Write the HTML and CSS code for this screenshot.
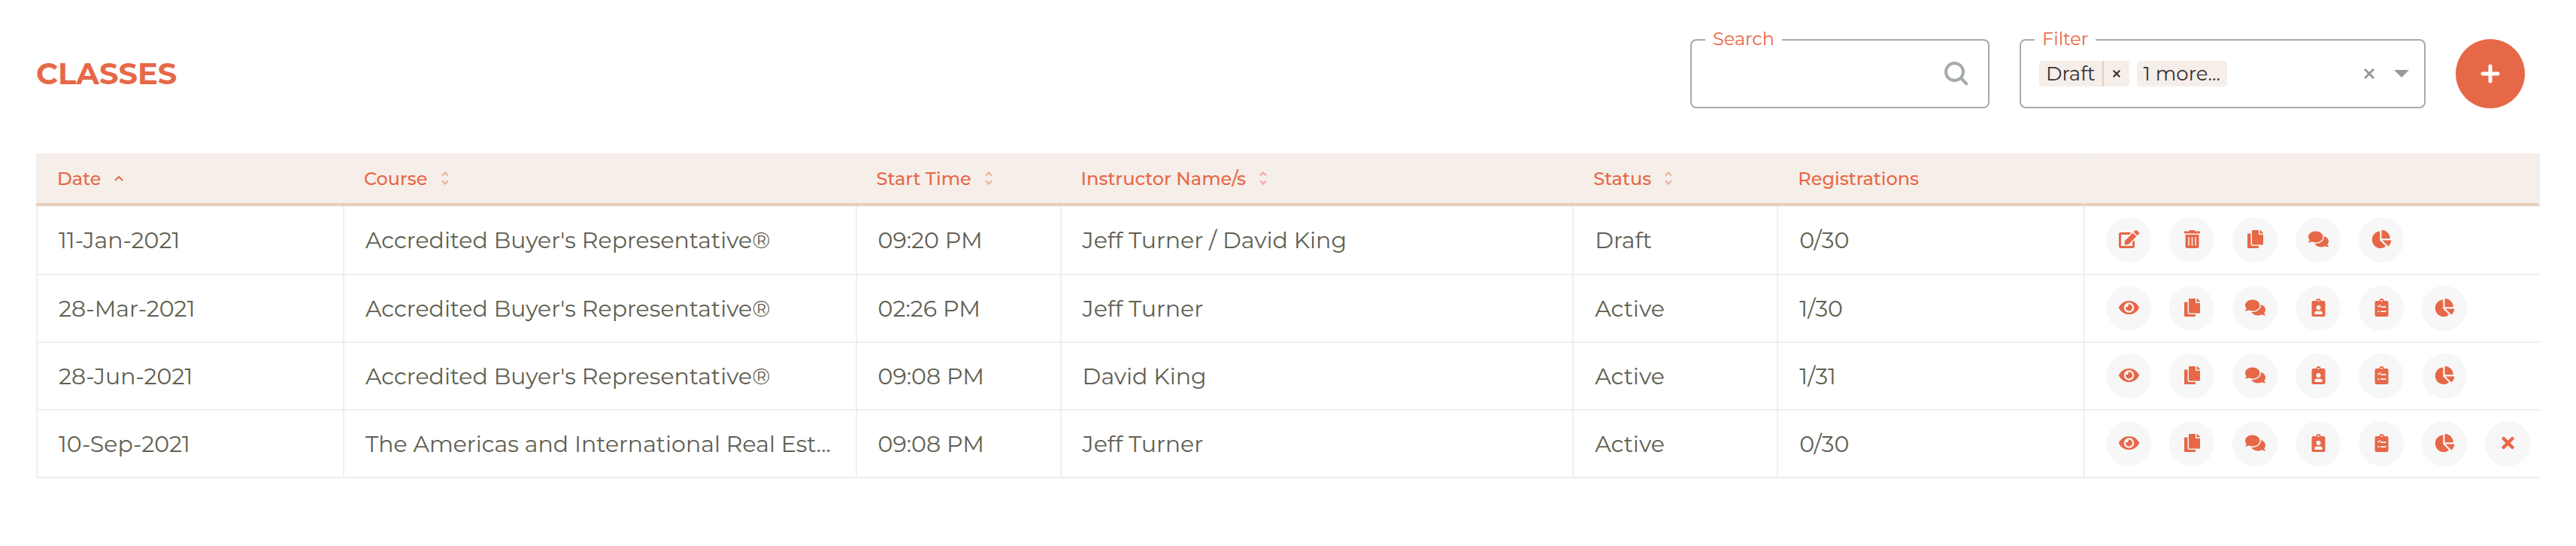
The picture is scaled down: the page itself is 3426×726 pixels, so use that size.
FILE: index.html
```
<!DOCTYPE html>
<html lang="en">

<head>
	<meta charset="UTF-8">
	<meta name="viewport" content="width=device-width, initial-scale=1.0">
	<title>Classes</title>
	<link rel="stylesheet" href="styles.css">
</head>

<body>
	<svg class="sprite" aria-hidden="true">
		<symbol id="edit" viewBox="0 0 576 512">
			<path d="M402.6 83.2l90.2 90.2c3.8 3.8 3.8 10 0 13.8L274.4 405.6l-92.8 10.3c-12.4 1.4-22.9-9.1-21.5-21.5l10.3-92.8L388.8 83.2c3.8-3.8 10-3.8 13.8 0zm162-22.9l-48.8-48.8c-15.2-15.2-39.9-15.2-55.2 0l-35.4 35.4c-3.8 3.8-3.8 10 0 13.8l90.2 90.2c3.8 3.8 10 3.8 13.8 0l35.4-35.4c15.2-15.3 15.2-40 0-55.2zM384 346.2V448H64V128h229.8c3.2 0 6.2-1.3 8.5-3.5l40-40c7.6-7.6 2.2-20.5-8.5-20.5H48C21.5 64 0 85.5 0 112v352c0 26.5 21.5 48 48 48h352c26.5 0 48-21.5 48-48V306.2c0-10.7-12.9-16-20.5-8.5l-40 40c-2.2 2.3-3.5 5.3-3.5 8.5z" />
		</symbol>
		<symbol id="trash" viewBox="0 0 448 512">
			<path d="M32 464a48 48 0 0 0 48 48h288a48 48 0 0 0 48-48V128H32zm272-256a16 16 0 0 1 32 0v224a16 16 0 0 1-32 0zm-96 0a16 16 0 0 1 32 0v224a16 16 0 0 1-32 0zm-96 0a16 16 0 0 1 32 0v224a16 16 0 0 1-32 0zM432 32H312l-9.4-18.7A24 24 0 0 0 281.1 0H166.8a23.72 23.72 0 0 0-21.4 13.3L136 32H16A16 16 0 0 0 0 48v32a16 16 0 0 0 16 16h416a16 16 0 0 0 16-16V48a16 16 0 0 0-16-16z" />
		</symbol>
		<symbol id="copy" viewBox="0 0 448 512">
			<path d="M320 448v40c0 13.255-10.745 24-24 24H24c-13.255 0-24-10.745-24-24V120c0-13.255 10.745-24 24-24h72v296c0 30.879 25.121 56 56 56h168zm0-344V0H152c-13.255 0-24 10.745-24 24v368c0 13.255 10.745 24 24 24h272c13.255 0 24-10.745 24-24V128H344c-13.2 0-24-10.8-24-24zm120.971-31.029L375.029 7.029A24 24 0 0 0 358.059 0H352v96h96v-6.059a24 24 0 0 0-7.029-16.97z" />
		</symbol>
		<symbol id="comments" viewBox="0 0 576 512">
			<path d="M416 192c0-88.4-93.1-160-208-160S0 103.6 0 192c0 34.3 14.1 65.9 38 92-13.4 30.2-35.5 54.2-35.8 54.5-2.2 2.3-2.8 5.7-1.5 8.7S4.8 352 8 352c36.6 0 66.9-12.3 88.7-25 32.2 15.7 70.3 25 111.3 25 114.9 0 208-71.6 208-160zm122 220c23.9-26 38-57.7 38-92 0-66.9-53.5-124.2-129.3-148.1.9 6.6 1.3 13.3 1.3 20.1 0 105.9-107.7 192-240 192-10.8 0-21.3-.8-31.7-1.9C207.8 439.6 281.8 480 368 480c41 0 79.1-9.2 111.3-25 21.8 12.7 52.1 25 88.7 25 3.2 0 6.1-1.9 7.3-4.8 1.3-2.9.7-6.3-1.5-8.7-.3-.3-22.4-24.2-35.8-54.5z" />
		</symbol>
		<symbol id="chart" viewBox="0 0 544 512">
			<path d="M527.79 288H290.5l158.03 158.03c6.04 6.04 15.98 6.53 22.19.68 38.7-36.46 65.32-85.61 73.13-140.86 1.34-9.46-6.51-17.85-16.06-17.85zm-15.83-64.8C503.72 103.74 408.26 8.28 288.8.04 279.68-.59 272 7.1 272 16.24V240h223.77c9.14 0 16.82-7.68 16.19-16.8zM224 288V50.71c0-9.55-8.39-17.4-17.84-16.06C86.99 51.49-4.1 155.6.14 280.37 4.5 408.51 114.83 513.59 243.03 511.98c50.4-.63 96.97-16.87 135.26-44.03 7.9-5.6 8.42-17.23 1.57-24.08L224 288z" />
		</symbol>
		<symbol id="eye" viewBox="0 0 576 512">
			<path d="M572.52 241.4C518.29 135.59 410.93 64 288 64S57.68 135.64 3.48 241.41a32.35 32.35 0 0 0 0 29.19C57.71 376.41 165.07 448 288 448s230.32-71.64 284.52-177.41a32.35 32.35 0 0 0 0-29.19zM288 400a144 144 0 1 1 144-144 143.93 143.93 0 0 1-144 144zm0-240a95.31 95.31 0 0 0-25.31 3.79 47.85 47.85 0 0 1-66.9 66.9A95.78 95.78 0 1 0 288 160z" />
		</symbol>
		<symbol id="attendees" viewBox="0 0 384 512">
			<path fill-rule="evenodd" d="M336 64h-80a64 64 0 0 0-128 0H48a48 48 0 0 0-48 48v352a48 48 0 0 0 48 48h288a48 48 0 0 0 48-48V112a48 48 0 0 0-48-48zM192 40a24 24 0 1 1 0 48 24 24 0 0 1 0-48zm0 152a64 64 0 1 1 0 128 64 64 0 0 1 0-128zm112 236.8c0 10.6-10 19.2-22.4 19.2H102.4C90 448 80 439.4 80 428.8v-19.2c0-31.8 30.1-57.6 67.2-57.6h5c24.6 10 55 10 79.6 0h5c37.1 0 67.2 25.8 67.2 57.6z" />
		</symbol>
		<symbol id="checklist" viewBox="0 0 384 512">
			<path fill-rule="evenodd" d="M336 64h-80a64 64 0 0 0-128 0H48a48 48 0 0 0-48 48v352a48 48 0 0 0 48 48h288a48 48 0 0 0 48-48V112a48 48 0 0 0-48-48zM192 40a24 24 0 1 1 0 48 24 24 0 0 1 0-48zM68 212l20-20 21 21 46-46 20 20-66 66zM176 220h136a8 8 0 0 1 8 8v20a8 8 0 0 1-8 8H152zM104 340a24 24 0 1 1 0 48 24 24 0 0 1 0-48zM168 346h144a8 8 0 0 1 8 8v20a8 8 0 0 1-8 8H168a8 8 0 0 1-8-8v-20a8 8 0 0 1 8-8z" />
		</symbol>
		<symbol id="times" viewBox="0 0 352 512">
			<path d="M242.72 256l100.07-100.07c12.28-12.28 12.28-32.19 0-44.48l-22.24-22.24c-12.28-12.28-32.19-12.28-44.48 0L176 189.28 75.93 89.21c-12.28-12.28-32.19-12.28-44.48 0L9.21 111.45c-12.28 12.28-12.28 32.19 0 44.48L109.28 256 9.21 356.07c-12.28 12.28-12.28 32.19 0 44.48l22.24 22.24c12.28 12.28 32.2 12.28 44.48 0L176 322.72l100.07 100.07c12.28 12.28 32.2 12.28 44.48 0l22.24-22.24c12.28-12.28 12.28-32.19 0-44.48L242.72 256z" />
		</symbol>
		<symbol id="cross" viewBox="0 0 14 14">
			<path d="M1 1l12 12M13 1L1 13" fill="none" stroke="currentColor" stroke-width="3" />
		</symbol>
		<symbol id="sort" viewBox="0 0 10 18">
			<path d="M1 5.5L5 1.5l4 4M1 12.5l4 4 4-4" fill="none" stroke="currentColor" stroke-width="2" />
		</symbol>
		<symbol id="sort-asc" viewBox="0 0 12 8">
			<path d="M1 7l5-5 5 5" fill="none" stroke="currentColor" stroke-width="2" />
		</symbol>
	</svg>

	<header class="toolbar">
		<h1>Classes</h1>
		<div class="field search">
			<label for="search">Search</label>
			<input type="search" id="search">
			<svg class="search-icon" viewBox="0 0 32 32">
				<circle cx="13.5" cy="13.5" r="11.5" />
				<path d="M21.5 21.5l9 9" />
			</svg>
		</div>
		<div class="field filter">
			<label for="filter">Filter</label>
			<select id="filter">
				<option>Draft</option>
				<option>Active</option>
			</select>
			<div class="chips">
				<span class="chip">
					<span class="chip-label">Draft</span>
					<button class="chip-remove" aria-label="Remove"><svg><use href="#cross" /></svg></button>
				</span>
				<span class="chip"><span class="chip-label">1 more...</span></span>
				<button class="clear" aria-label="Clear"><svg><use href="#cross" /></svg></button>
				<span class="caret"></span>
			</div>
		</div>
		<button class="add" aria-label="Add class">
			<svg viewBox="0 0 26 26"><path d="M13 3v20M3 13h20" /></svg>
		</button>
	</header>

	<table class="classes">
		<colgroup>
			<col class="col-medium">
			<col class="col-wide">
			<col class="col-narrow">
			<col class="col-wide">
			<col class="col-narrow">
			<col class="col-medium">
			<col>
		</colgroup>
		<thead>
			<tr>
				<th><button class="sort active">Date <svg><use href="#sort-asc" /></svg></button></th>
				<th><button class="sort">Course <svg><use href="#sort" /></svg></button></th>
				<th><button class="sort">Start Time <svg><use href="#sort" /></svg></button></th>
				<th><button class="sort">Instructor Name/s <svg><use href="#sort" /></svg></button></th>
				<th><button class="sort">Status <svg><use href="#sort" /></svg></button></th>
				<th>Registrations</th>
				<th class="actions-head"></th>
			</tr>
		</thead>
		<tbody>
			<tr>
				<td>11-Jan-2021</td>
				<td>Accredited Buyer's Representative®</td>
				<td>09:20 PM</td>
				<td>Jeff Turner / David King</td>
				<td>Draft</td>
				<td>0/30</td>
				<td>
					<div class="actions">
						<button aria-label="Edit"><svg><use href="#edit" /></svg></button>
						<button aria-label="Delete"><svg><use href="#trash" /></svg></button>
						<button aria-label="Copy"><svg><use href="#copy" /></svg></button>
						<button aria-label="Messages"><svg><use href="#comments" /></svg></button>
						<button aria-label="Report"><svg><use href="#chart" /></svg></button>
					</div>
				</td>
			</tr>
			<tr>
				<td>28-Mar-2021</td>
				<td>Accredited Buyer's Representative®</td>
				<td>02:26 PM</td>
				<td>Jeff Turner</td>
				<td>Active</td>
				<td>1/30</td>
				<td>
					<div class="actions">
						<button aria-label="View"><svg><use href="#eye" /></svg></button>
						<button aria-label="Copy"><svg><use href="#copy" /></svg></button>
						<button aria-label="Messages"><svg><use href="#comments" /></svg></button>
						<button aria-label="Attendees"><svg><use href="#attendees" /></svg></button>
						<button aria-label="Checklist"><svg><use href="#checklist" /></svg></button>
						<button aria-label="Report"><svg><use href="#chart" /></svg></button>
					</div>
				</td>
			</tr>
			<tr>
				<td>28-Jun-2021</td>
				<td>Accredited Buyer's Representative®</td>
				<td>09:08 PM</td>
				<td>David King</td>
				<td>Active</td>
				<td>1/31</td>
				<td>
					<div class="actions">
						<button aria-label="View"><svg><use href="#eye" /></svg></button>
						<button aria-label="Copy"><svg><use href="#copy" /></svg></button>
						<button aria-label="Messages"><svg><use href="#comments" /></svg></button>
						<button aria-label="Attendees"><svg><use href="#attendees" /></svg></button>
						<button aria-label="Checklist"><svg><use href="#checklist" /></svg></button>
						<button aria-label="Report"><svg><use href="#chart" /></svg></button>
					</div>
				</td>
			</tr>
			<tr>
				<td>10-Sep-2021</td>
				<td>The Americas and International Real Est...</td>
				<td>09:08 PM</td>
				<td>Jeff Turner</td>
				<td>Active</td>
				<td>0/30</td>
				<td>
					<div class="actions">
						<button aria-label="View"><svg><use href="#eye" /></svg></button>
						<button aria-label="Copy"><svg><use href="#copy" /></svg></button>
						<button aria-label="Messages"><svg><use href="#comments" /></svg></button>
						<button aria-label="Attendees"><svg><use href="#attendees" /></svg></button>
						<button aria-label="Checklist"><svg><use href="#checklist" /></svg></button>
						<button aria-label="Report"><svg><use href="#chart" /></svg></button>
						<button aria-label="Cancel"><svg><use href="#times" /></svg></button>
					</div>
				</td>
			</tr>
		</tbody>
	</table>
</body>

</html>
```
FILE: styles.css
```
* {
	box-sizing: border-box;
}

body {
	margin: 0;
	padding: 52px 48px;
	background-color: #fff;
	color: #5f6052;
	font-family: Montserrat, Inter, sans-serif;
	font-size: 30px;
}

button {
	padding: 0;
	border: none;
	background: none;
	color: inherit;
	font: inherit;
	cursor: pointer;
}

.sprite {
	display: none;
}

.toolbar {
	display: flex;
	align-items: center;
	gap: 40px;
	padding-right: 20px;
	margin-bottom: 60px;
}

h1 {
	flex: 1;
	margin: 0;
	color: #e76847;
	font-size: 40px;
	font-weight: 700;
	line-height: 48px;
	text-transform: uppercase;
}

.field {
	position: relative;
	height: 92px;
}

.search {
	width: 398px;
}

.filter {
	width: 540px;
}

/* label sits on top of the border */
.field label {
	position: absolute;
	top: -15px;
	left: 20px;
	padding: 0 10px;
	background-color: #fff;
	color: #e76847;
	font-size: 24px;
	line-height: 30px;
}

.field input,
.field select {
	appearance: none;
	width: 100%;
	height: 100%;
	padding: 0 80px 0 26px;
	border: 2px solid #a4acaa;
	border-radius: 8px;
	outline: none;
	background-color: #fff;
	color: #333;
	font: inherit;
	font-size: 26px;
}

/* the chips show the selection instead */
.field select {
	color: transparent;
}

.search-icon {
	position: absolute;
	top: 30px;
	right: 28px;
	width: 32px;
	height: 32px;
	fill: none;
	stroke: #a4acaa;
	stroke-width: 4;
}

.chips {
	position: absolute;
	inset: 0;
	display: flex;
	align-items: center;
	gap: 10px;
	padding: 0 22px 0 26px;
	color: #333;
	font-size: 26px;
	line-height: 34px;
	pointer-events: none;
}

.chips button {
	pointer-events: auto;
}

.chip {
	display: flex;
	height: 34px;
	border-radius: 4px;
	background-color: #f6eee9;
}

.chip-label {
	padding: 0 9px;
}

.chip-remove {
	width: 36px;
	border-left: 2px solid #e9ceb9;
}

.chip-remove svg {
	display: block;
	width: 10px;
	height: 10px;
	margin: 0 auto;
}

.clear {
	margin-left: auto;
	color: #999;
}

.clear svg {
	display: block;
	width: 14px;
	height: 14px;
}

.caret {
	margin-left: 16px;
	border: 10px solid transparent;
	border-top-color: #999;
	border-bottom: none;
}

.add {
	display: flex;
	align-items: center;
	justify-content: center;
	width: 92px;
	height: 92px;
	border-radius: 50%;
	background-color: #e76847;
}

.add svg {
	width: 26px;
	height: 26px;
	stroke: #fff;
	stroke-width: 5;
	stroke-linecap: round;
}

.classes {
	width: 100%;
	table-layout: fixed;
	border-collapse: separate;
	border-spacing: 0;
}

.col-narrow {
	width: 8.17%;
}

.col-medium {
	width: 12.25%;
}

.col-wide {
	width: 20.47%;
}

th {
	height: 70px;
	padding: 0 28px;
	border-bottom: 4px solid #e9ceb9;
	background-color: #f6eee9;
	color: #e76847;
	font-size: 24px;
	font-weight: 500;
	text-align: left;
}

.actions-head {
	border-left: 2px solid #efefef;
	border-right: 2px solid #efefef;
}

.sort {
	display: flex;
	align-items: center;
	gap: 18px;
}

.sort svg {
	width: 10px;
	height: 18px;
	opacity: 0.5;
}

.sort.active svg {
	width: 12px;
	height: 8px;
	opacity: 1;
}

td {
	height: 90px;
	padding: 0 0 0 28px;
	border-left: 2px solid #efefef;
	border-bottom: 2px solid #efefef;
	white-space: nowrap;
}

tbody tr:first-child td {
	height: 92px;
}

.actions {
	display: flex;
	gap: 24px;
}

.actions button {
	display: flex;
	align-items: center;
	justify-content: center;
	width: 60px;
	height: 60px;
	padding-bottom: 2px;
	border-radius: 50%;
	background-color: #f7f7f7;
	color: #e76847;
}

.actions svg {
	width: 27px;
	height: 24px;
	fill: currentColor;
}
```
